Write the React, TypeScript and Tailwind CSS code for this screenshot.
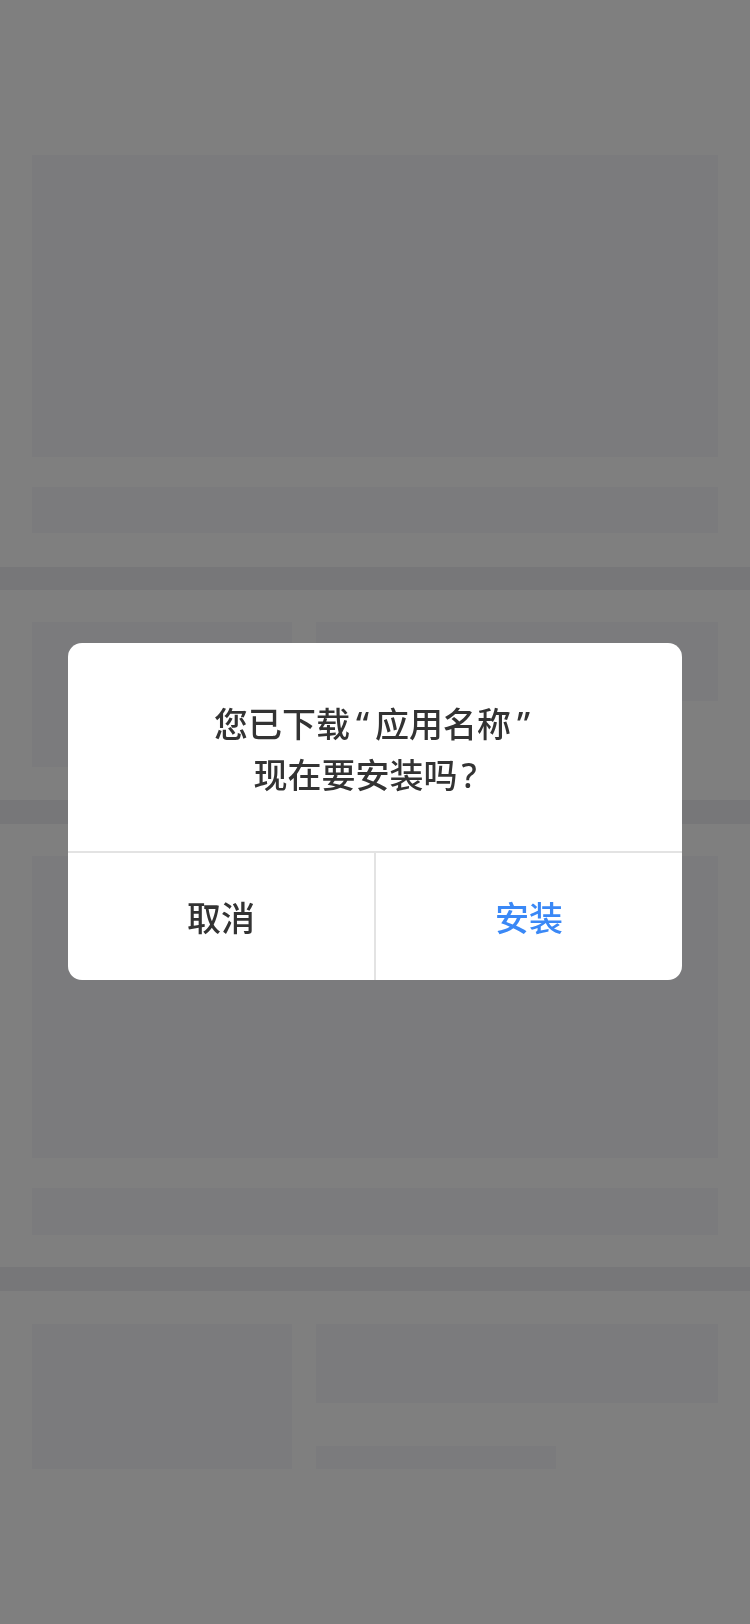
export default function App() {
  return (
    <div
      className="relative min-h-screen bg-white"
      style={{ fontFamily: '"Noto Sans CJK SC", "Noto Sans", sans-serif' }}
    >
      {/* page skeleton behind the dialog */}
      <div className="px-8 pt-[155px] pb-[34px]">
        <div className="h-[302px] bg-[#f6f7fa]" />
        <div className="mt-[30px] h-[46px] bg-[#f6f7fa]" />
      </div>
      <div className="h-[23px] bg-[#eeeff2]" />
      <div className="flex gap-6 px-8 pt-8 pb-[33px]">
        <div className="h-[145px] w-[260px] bg-[#f6f7fa]" />
        <div className="h-[79px] flex-1 bg-[#f6f7fa]" />
      </div>
      <div className="h-[24px] bg-[#eeeff2]" />
      <div className="px-8 pt-8 pb-8">
        <div className="h-[302px] bg-[#f6f7fa]" />
        <div className="mt-[30px] h-[47px] bg-[#f6f7fa]" />
      </div>
      <div className="h-[24px] bg-[#eeeff2]" />
      <div className="flex gap-6 px-8 pt-[33px]">
        <div className="h-[145px] w-[260px] bg-[#f6f7fa]" />
        <div className="flex flex-1 flex-col justify-between">
          <div className="h-[79px] bg-[#f6f7fa]" />
          <div className="h-[23px] w-[240px] bg-[#f6f7fa]" />
        </div>
      </div>

      {/* mask + dialog */}
      <div className="fixed inset-0 bg-black/50">
        <div className="absolute left-[68px] top-[643px] w-[614px] overflow-hidden rounded-[14px] bg-white">
          <div className="flex h-[208px] flex-col items-center justify-center pt-1 text-[34px] leading-[50px] font-medium text-[#333333]">
            <p>
              您已下载
              <span className="px-[6px] font-['Noto_Sans',sans-serif]">“</span>
              应用名称
              <span className="px-[6px] font-['Noto_Sans',sans-serif]">”</span>
            </p>
            <p className="pr-5">
              现在要安装吗
              <span className="ml-[4px] font-['Noto_Sans',sans-serif]">?</span>
            </p>
          </div>
          <div className="flex h-[129px] border-t-2 border-[#e3e3e3] text-[34px] font-medium">
            <button className="flex-1 text-[#333333]">取消</button>
            <div className="w-[2px] bg-[#e3e3e3]" />
            <button className="flex-1 text-[#3a88f6]">安装</button>
          </div>
        </div>
      </div>
    </div>
  );
}
